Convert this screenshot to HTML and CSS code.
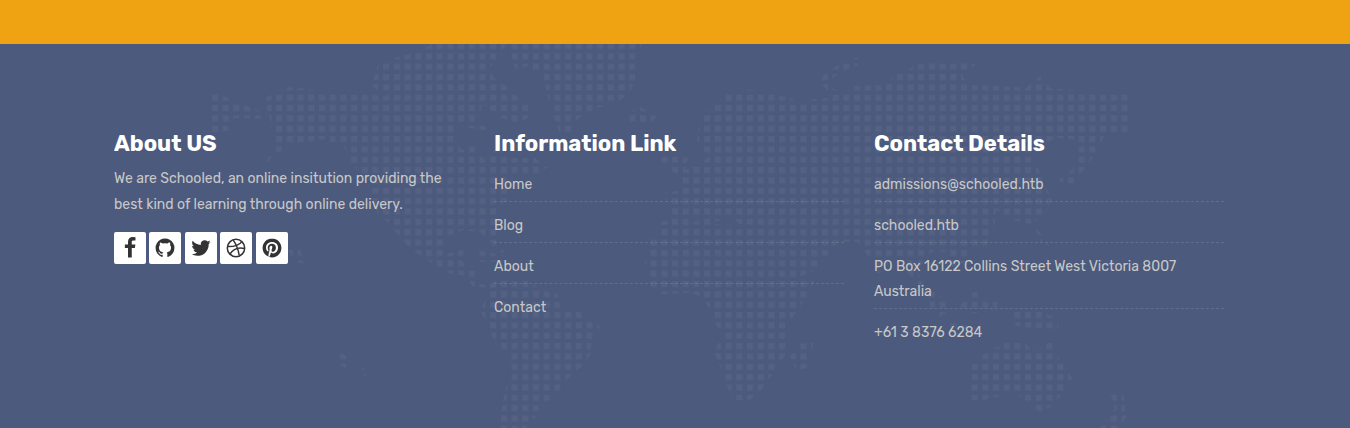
FILE: index.html
```html
<!DOCTYPE html>
<html lang="en">
<head>
<meta charset="utf-8">
<title>Schooled</title>
<link rel="stylesheet" href="styles.css">
</head>
<body>
<div class="band"></div>
<footer class="footer">
  <svg class="map" viewBox="0 44 1350 384" preserveAspectRatio="xMidYMin slice" aria-hidden="true">
    <defs>
      <pattern id="dots" x="212" y="105" width="10.7" height="10.35" patternUnits="userSpaceOnUse">
        <rect width="6" height="6"/>
      </pattern>
    </defs>
    <g fill="url(#dots)">
      <path d="M212 92 228 98 243 105 262 112 262 119 236 118 225 124 231 130 212 134Z"/>
      <path d="M265 98 287 87 315 90 370 95 388 96 390 98 372 86 378 64 395 58 410 54 425 48 432 44 506 44 500 58 488 68 494 78 506 86 515 95 528 105 528 118 516 124 500 117 482 104 479 120 490 131 470 128 454 124 453 140 462 150 474 146 484 160 496 148 512 158 535 158 547 167 540 173 515 175 507 186 510 198 498 208 496 222 497 234 504 252 498 254 489 240 480 232 462 230 447 237 444 254 456 252 464 249 462 262 476 270 480 284 500 287 496 291 474 288 466 276 448 273 430 262 412 250 400 238 390 224 378 214 372 200 370 180 358 172 350 160 345 148 325 139 305 142 285 148 265 163 274 148 274 140 270 120Z"/>
      <path d="M510 44 642 44 634 60 636 78 630 92 616 104 596 108 576 120 572 132 560 134 552 112 548 98 543 76 528 66 516 70 511 56Z"/>
      <path d="M628 112 640 107 658 116 648 125 630 124ZM478 250 506 256 508 262 480 262Z"/>
      <path d="M490 284 500 276 530 280 540 290 558 294 560 308 580 312 590 320 600 326 592 340 590 355 582 366 566 380 555 396 545 404 538 414 526 428 500 428 502 408 505 390 511 376 510 352 496 346 488 326 481 312Z"/>
      <path d="M655 240 660 222 670 220 672 204 660 194 682 190 682 180 660 160 664 155 688 158 685 170 698 164 708 158 697 140 700 118 716 104 726 94 748 89 775 94 792 99 798 104 812 99 834 98 820 82 824 74 840 64 858 57 858 65 836 75 828 85 842 94 855 86 884 85 896 74 920 64 940 60 976 64 962 76 970 85 1000 86 1026 88 1040 76 1050 88 1074 90 1092 94 1128 94 1128 134 1104 136 1098 150 1090 162 1080 174 1074 184 1058 181 1074 168 1078 140 1058 138 1046 142 1032 160 1040 172 1046 186 1052 200 1044 216 1030 224 1012 220 996 210 994 230 986 245 972 250 966 262 952 268 950 254 936 250 926 256 918 272 926 290 918 286 906 270 906 256 890 256 886 270 878 274 868 256 858 242 838 242 826 258 812 272 796 278 786 274 782 260 774 242 768 226 740 224 730 218 712 222 690 218 680 232ZM650 240 668 230 688 222 712 220 716 224 766 226 782 252 792 276 815 279 806 298 795 314 785 328 786 354 774 372 760 392 750 400 732 400 724 376 714 352 722 336 712 316 704 298 692 293 660 294 648 284 645 262Z"/>
      <path d="M790 356 800 344 814 342 808 368 796 370ZM1034 226 1041 234 1050 246 1042 244Z"/>
      <path d="M928 286 940 296 950 310 938 318 930 306ZM960 306 970 294 978 291 982 302 998 302 996 310 970 314ZM1012 312 1040 311 1056 318 1060 332 1034 328 1016 326ZM950 322 976 328 970 332 950 326Z"/>
      <path d="M971 364 984 354 1000 346 1010 341 1024 342 1032 350 1042 348 1050 340 1056 354 1064 366 1072 378 1064 392 1052 406 1040 412 1028 404 1016 394 1000 396 980 401 970 400Z"/>
      <path d="M1110 392 1124 396 1126 418 1118 428 1100 428 1115 408ZM339 352 346 356 346 368 340 365ZM360 367 368 371 364 377ZM285 246 300 248 304 264 294 261Z"/>
    </g>
  </svg>

  <div class="columns">
    <section class="column">
      <h3 class="title">About US</h3>
      <p class="about">We are Schooled, an online insitution providing the best kind of learning through online delivery.</p>
      <div class="social">
        <a class="social-link" href="#" aria-label="Facebook"><svg class="icon" viewBox="0 0 1792 1792"><path d="M1343 12v264h-157q-86 0-116 36t-30 108v189h293l-39 296h-254v759h-306v-759h-255v-296h255v-218q0-186 104-288.500t277-102.500q147 0 228 12z"/></svg></a>
        <a class="social-link" href="#" aria-label="GitHub"><svg class="icon" viewBox="0 0 1792 1792"><path d="M896 128q209 0 385.500 103t279.500 279.500 103 385.500q0 251-146.500 451.500t-378.500 277.500q-27 5-40-7t-13-30q0-3 .5-76.500t.5-134.500q0-97-52-142 57-6 102.500-18t94-39 81-66.500 53-105 20.500-150.500q0-119-79-206 37-91-8-204-28-9-81 11t-92 44l-38 24q-93-26-192-26t-192 26q-16-11-42.500-27t-83.500-38.500-85-13.500q-45 113-8 204-79 87-79 206 0 85 20.500 150t52.500 105 80.500 67 94 39 102.500 18q-39 36-49 103-21 10-45 15t-57 5-65.500-21.500-55.500-62.500q-19-32-48.500-52t-49.500-24l-20-3q-21 0-29 4.500t-5 11.500 9 14 13 12l7 5q22 10 43.500 38t31.500 51l10 23q13 38 44 61.500t67 30 69.500 7 55.500-3.500l23-4q0 38 .5 88.500t.5 54.500q0 18-13 30t-40 7q-232-77-378.500-277.500t-146.500-451.500q0-209 103-385.500t279.500-279.500 385.500-103z"/></svg></a>
        <a class="social-link" href="#" aria-label="Twitter"><svg class="icon" viewBox="0 0 1792 1792"><path d="M1684 408q-67 98-162 167 1 14 1 42 0 130-38 259.500t-115.500 248.500-184.500 210.500-258 146-323 54.500q-271 0-496-145 35 4 78 4 225 0 401-138-105-2-188-64.500t-114-159.500q33 5 61 5 43 0 85-11-112-23-185.500-111.500t-73.500-205.500v-4q68 38 146 41-66-44-105-115t-39-154q0-88 44-163 121 149 294.500 238.500t371.500 99.500q-8-38-8-74 0-134 94.500-228.500t228.500-94.500q140 0 236 102 109-21 205-78-37 115-142 178 93-10 186-50z"/></svg></a>
        <a class="social-link" href="#" aria-label="Dribbble"><svg class="icon" viewBox="0 0 22 22"><g fill="none" stroke="#333" stroke-width="1.5"><circle cx="11" cy="11" r="8.700"/><path d="M8 2.900c3 3.800 5 8.500 6.200 15.400M2.500 9.600c5.500.2 11-.7 14.500-5M5 17.200c3-5 7.800-7.300 14.600-5.700"/></g></svg></a>
        <a class="social-link" href="#" aria-label="Pinterest"><svg class="icon" viewBox="-2 -2 28 28"><path d="M12.017 0C5.396 0 .029 5.367.029 11.987c0 5.079 3.158 9.417 7.618 11.162-.105-.949-.199-2.403.041-3.439.219-.937 1.406-5.957 1.406-5.957s-.359-.72-.359-1.781c0-1.663.967-2.911 2.168-2.911 1.024 0 1.518.769 1.518 1.688 0 1.029-.653 2.567-.992 3.992-.285 1.193.6 2.165 1.775 2.165 2.128 0 3.768-2.245 3.768-5.487 0-2.861-2.063-4.869-5.008-4.869-3.410 0-5.409 2.562-5.409 5.199 0 1.033.394 2.143.889 2.741.099.12.112.225.085.345-.09.375-.293 1.199-.334 1.363-.053.225-.172.271-.401.165-1.495-.69-2.433-2.878-2.433-4.646 0-3.776 2.748-7.252 7.920-7.252 4.158 0 7.392 2.967 7.392 6.923 0 4.135-2.607 7.462-6.233 7.462-1.214 0-2.354-.629-2.758-1.379l-.749 2.848c-.269 1.045-1.004 2.352-1.498 3.146 1.123.345 2.306.535 3.550.535 6.607 0 11.985-5.365 11.985-11.987C23.970 5.390 18.592.026 11.985.026z"/></svg></a>
      </div>
    </section>
    <section class="column">
      <h3 class="title">Information Link</h3>
      <ul class="list">
        <li class="item"><a class="link" href="#">Home</a></li>
        <li class="item"><a class="link" href="#">Blog</a></li>
        <li class="item"><a class="link" href="#">About</a></li>
        <li class="item"><a class="link" href="#">Contact</a></li>
      </ul>
    </section>
    <section class="column">
      <h3 class="title">Contact Details</h3>
      <ul class="list">
        <li class="item"><a class="link" href="#">admissions@schooled.htb</a></li>
        <li class="item"><a class="link" href="#">schooled.htb</a></li>
        <li class="item">PO Box 16122 Collins Street West Victoria 8007 Australia</li>
        <li class="item">+61 3 8376 6284</li>
      </ul>
    </section>
  </div>
</footer>
</body>
</html>
```
FILE: styles.css
```css
* { box-sizing: border-box; }

body {
  margin: 0;
  min-height: 100vh;
  display: flex;
  flex-direction: column;
  font-family: Rubik, Roboto, sans-serif;
  font-size: 14px;
  color: #c8c8c8;
  background: #4c5a7d;
}

.band { height: 44px; background: #efa312; }

.footer {
  position: relative;
  flex: 1;
  padding: 85px 12px 60px 0;
  overflow: hidden;
}

.map {
  position: absolute;
  inset: 0;
  width: 100%;
  height: 100%;
}
.map pattern rect { fill: #fff; fill-opacity: 0.045; }

.columns {
  position: relative;
  display: grid;
  grid-template-columns: repeat(3, 1fr);
  gap: 30px;
  max-width: 1110px;
  margin: 0 auto;
}

.title {
  margin: 0;
  font-size: 22px;
  font-weight: 700;
  line-height: 30px;
  color: #fff;
}

.about { margin: 7px 0 14px; line-height: 26px; }

.social { line-height: 0; }
.social-link {
  display: inline-flex;
  align-items: center;
  justify-content: center;
  width: 32px;
  height: 32px;
  border-radius: 2px;
  background: #fff;
}
.icon { width: 22px; height: 22px; fill: #333; }

.list { margin: 13px 0 0; padding: 0; list-style: none; }
.item {
  margin-bottom: 11px;
  padding-bottom: 4px;
  line-height: 25px;
  border-bottom: 1px dashed rgba(255, 255, 255, 0.12);
}
.item:last-child { border-bottom: 0; }
.link { color: inherit; text-decoration: none; }
```
